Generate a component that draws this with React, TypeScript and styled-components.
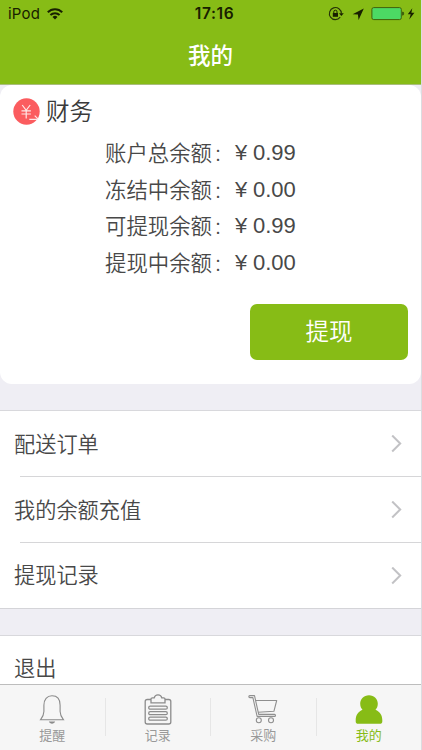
import React from "react";
import styled, { createGlobalStyle } from "styled-components";

const GREEN = "#87bc16";

const GlobalStyle = createGlobalStyle`
  * { box-sizing: border-box; }
  body {
    margin: 0;
    background: #efeef4;
    font-family: "Inter", "Noto Sans CJK SC", sans-serif;
    color: #484848;
    font-weight: 350;
  }
`;

const Screen = styled.div`
  width: 422px;
  height: 750px;
  display: flex;
  flex-direction: column;
  overflow: hidden;
  background: #efeef4;
  border-right: 1px solid #dcdce0;
`;

const Header = styled.header`
  flex: none;
  height: 85px;
  margin-right: -1px;
  background: ${GREEN};
  border-bottom: 1px solid #a9bd7c;
`;

const StatusBar = styled.div`
  height: 28px;
  display: grid;
  grid-template-columns: 1fr auto 1fr;
  align-items: center;
  padding: 0 6px 0 8px;
  color: #182000;
  font-size: 14px;
  line-height: 28px;
`;

const Carrier = styled.div`
  display: flex;
  align-items: center;
  gap: 7px;
  font-size: 15px;
  font-weight: 400;
  letter-spacing: 0.2px;
`;

const Clock = styled.div`
  font-weight: 600;
  font-size: 15.5px;
  letter-spacing: 0.6px;
  padding-left: 5px;
`;

const Indicators = styled.div`
  display: flex;
  justify-content: flex-end;
  align-items: center;
`;

const Title = styled.h1`
  margin: 0;
  height: 56px;
  line-height: 56px;
  text-align: center;
  padding-right: 1px;
  font-size: 22.5px;
  font-weight: 500;
  color: #fff;
`;

const Content = styled.main`
  flex: 1;
  min-height: 0;
  overflow: hidden;
`;

const Card = styled.section`
  height: 299px;
  background: #fff;
  border-radius: 12px;
  padding: 12px 13px 0;
  display: flex;
  flex-direction: column;
`;

const CardTitle = styled.div`
  height: 28px;
  display: flex;
  align-items: center;
  gap: 6px;
  font-size: 23.5px;
  color: #3a3a3a;
`;

const CardName = styled.span`
  line-height: 28px;
  padding-top: 2px;
`;

const Balances = styled.div`
  margin: 10px 0 0 92px;
`;

const BalanceRow = styled.div`
  height: 36.6px;
  display: flex;
  align-items: center;
  font-size: 21.4px;
  line-height: 36px;
  white-space: nowrap;
`;

const BalanceLabel = styled.span`
  width: 130px;
`;

const Colon = styled.span`
  padding-left: 3px;
`;

const Amount = styled.span`
  display: flex;
  gap: 6px;
  font-family: "Liberation Sans", sans-serif;
  font-size: 22px;
`;

const Yen = styled.span`
  width: 12px;
`;

const WithdrawButton = styled.button`
  align-self: flex-end;
  width: 158px;
  height: 56px;
  margin-top: 23px;
  padding: 0;
  border: 0;
  border-radius: 7px;
  background: ${GREEN};
  color: #fff;
  font: inherit;
  font-size: 23.5px;
  line-height: 56px;
`;

const List = styled.ul`
  list-style: none;
  margin: 26px 0 0;
  padding: 0;
  background: #fff;
  border-top: 1px solid #d8d8dc;
  border-bottom: 1px solid #d4d4d8;
`;

const ListRow = styled.li`
  height: 66px;
  display: flex;
  align-items: center;
  justify-content: space-between;
  padding: 0 18px 0 14px;
  font-size: 21.2px;
  background: linear-gradient(#d6d6d8, #d6d6d8) 20px 100% / 100% 1px no-repeat;

  &:last-child {
    background: none;
    height: 65px;
  }
`;

const RowName = styled.span`
  line-height: 30px;
  padding-bottom: 1px;
`;

const TabBar = styled.nav`
  flex: none;
  height: 66px;
  margin-right: -1px;
  display: grid;
  grid-template-columns: repeat(4, 1fr);
  background: #f6f6f6;
  border-top: 1px solid #bdbdbd;
`;

const Tab = styled.div<{ $active?: boolean }>`
  display: flex;
  flex-direction: column;
  align-items: center;
  padding-top: 8px;
  padding-right: 1px;
  font-size: 13px;
  font-weight: 400;
  line-height: 17px;
  color: ${(p) => (p.$active ? GREEN : "#999")};
  background: linear-gradient(#e6e6e6, #e6e6e6) 100% 13px / 1px 38px no-repeat;

  &:last-child { background: none; }
  svg { flex: none; margin-bottom: 2px; }
`;

const WifiIcon = () => (
  <svg width="16" height="12" viewBox="0 0 16 12" fill="none" stroke="#182000" strokeWidth="2">
    <path d="M.8 4.3C4.7.2 11.3.2 15.2 4.3" />
    <path d="M3.4 7C6 4.5 10 4.5 12.6 7" />
    <path d="M5.5 9.1a3.5 3.5 0 0 1 5 0L8 11.6z" fill="#182000" stroke="none" />
  </svg>
);

const StatusIcons = () => (
  <svg width="88" height="18" viewBox="328 5 88 18" fill="none">
    <path d="M340.2 17.2a6 6 0 1 1 1.2-3.6" stroke="#263108" strokeWidth="1.1" />
    <path d="M339 13.2h4.8l-2.4 2.8z" fill="#182000" />
    <rect x="332.8" y="13" width="5.2" height="3.8" fill="#182000" />
    <path d="M333.8 13v-1.2a1.6 1.6 0 0 1 3.2 0V13" stroke="#182000" />
    <path d="M352.6 14.2l11.2-5.6-5.2 11.4-.7-5.5z" fill="#182000" />
    <rect x="371.9" y="7.6" width="29.4" height="12" rx="1.8" fill="#4cd964" stroke="#40600c" />
    <path d="M402 11.7h.7a1.4 1.4 0 0 1 1.4 1.4v1a1.4 1.4 0 0 1-1.4 1.4h-.7z" fill="#40600c" />
    <path d="M412.3 8.2l-4.5 6h2.9l-1.5 5.3 5.2-6.8h-3z" fill="#182000" />
  </svg>
);

const CoinIcon = () => (
  <svg width="27" height="27" viewBox="0 0 27 27" fill="none" stroke="#ffe6e6" strokeWidth="1.2">
    <circle cx="13.5" cy="13.5" r="13.2" fill="#fb5c5f" stroke="none" />
    <path d="M9.2 7l4 5.3L17.2 7M13.2 12.3v8.2M8.5 12.8h9.4M8.5 16h9.4" />
    <path d="M16.3 21.4h8.4M21.7 17.7l3.5 3.5" />
  </svg>
);

const Chevron = () => (
  <svg width="12" height="18" viewBox="0 0 12 18" fill="none" stroke="#c2c2c5" strokeWidth="2">
    <path d="M1.2.5l8 8-8 8" />
  </svg>
);

const BellIcon = () => (
  <svg width="26" height="32" viewBox="0 0 26 32" fill="none" stroke="#8b8b8b" strokeWidth="1.1">
    <path d="M4.9 12.2C4.9 6.3 8 2.8 13 2.8s8.1 3.5 8.1 9.4v6.3c0 3.4 1.3 5.6 3.4 8.3h-23c2.1-2.7 3.4-4.9 3.4-8.3z" />
    <path d="M9.9 28.6h6.2c-.8 2.8-5.4 2.8-6.2 0z" fill="#8b8b8b" stroke="none" />
  </svg>
);

const ClipboardIcon = () => (
  <svg width="28" height="32" viewBox="0 0 28 32" fill="none" stroke="#8c8c8c" strokeWidth="1.3">
    <path d="M7 6.5H3.3C2 6.5 1.2 7.3 1.2 8.5V29c0 1.3.8 2 2.1 2h21.4c1.3 0 2.1-.7 2.1-2V8.5c0-1.2-.8-2-2.1-2H21" />
    <path d="M7 9.8V6c0-.8.6-1.2 1.4-1.2h1.8c.4-1.8 2-3 3.8-3s3.4 1.2 3.8 3h1.8c.8 0 1.4.4 1.4 1.2v3.8z" />
    <rect x="4.7" y="13.2" width="18.6" height="3" rx="1.5" />
    <rect x="4.7" y="18.7" width="18.6" height="3" rx="1.5" />
    <rect x="4.7" y="24.2" width="18.6" height="3" rx="1.5" />
  </svg>
);

const CartIcon = () => (
  <svg width="30" height="32" viewBox="0 0 30 32" fill="none" stroke="#8f8f8f" strokeWidth="1.1" strokeLinejoin="round">
    <path d="M7.6 7.5h21.1l-2.8 10.8-15.9 1" />
    <path d="M1.8 4.6h3.1l4.2 18.8h17.4c1.3 0 1.3-2 0-2H10.7L6.5 2.6H1.8c-1.3 0-1.3 2 0 2z" />
    <circle cx="10.8" cy="27.3" r="2.5" />
    <circle cx="23" cy="27.3" r="2.5" />
  </svg>
);

const PersonIcon = () => (
  <svg width="28" height="32" viewBox="0 0 28 32" fill={GREEN}>
    <path d="M14 2.3c-5.2 0-8.8 3.8-8.8 8.5 0 2.6.9 4.4 2.3 6C3.3 18.7.7 22 .7 27v1.4c0 1.5 1 2.4 2.5 2.4h21.6c1.5 0 2.5-.9 2.5-2.4V27c0-5-2.6-8.3-6.8-10.2 1.4-1.6 2.3-3.4 2.3-6 0-4.7-3.6-8.5-8.8-8.5z" />
  </svg>
);

const balances = [
  ["账户总余额", "0.99"],
  ["冻结中余额", "0.00"],
  ["可提现余额", "0.99"],
  ["提现中余额", "0.00"],
];

export default function App() {
  return (
    <Screen>
      <GlobalStyle />
      <Header>
        <StatusBar>
          <Carrier>iPod<WifiIcon /></Carrier>
          <Clock>17:16</Clock>
          <Indicators><StatusIcons /></Indicators>
        </StatusBar>
        <Title>我的</Title>
      </Header>
      <Content>
        <Card>
          <CardTitle><CoinIcon /><CardName>财务</CardName></CardTitle>
          <Balances>
            {balances.map(([label, value]) => (
              <BalanceRow key={label}>
                <BalanceLabel>{label}<Colon>:</Colon></BalanceLabel>
                <Amount><Yen>¥</Yen>{value}</Amount>
              </BalanceRow>
            ))}
          </Balances>
          <WithdrawButton>提现</WithdrawButton>
        </Card>
        <List>
          {["配送订单", "我的余额充值", "提现记录"].map((name) => (
            <ListRow key={name}><RowName>{name}</RowName><Chevron /></ListRow>
          ))}
        </List>
        <List>
          <ListRow><RowName>退出</RowName></ListRow>
        </List>
      </Content>
      <TabBar>
        <Tab><BellIcon />提醒</Tab>
        <Tab><ClipboardIcon />记录</Tab>
        <Tab><CartIcon />采购</Tab>
        <Tab $active><PersonIcon />我的</Tab>
      </TabBar>
    </Screen>
  );
}
